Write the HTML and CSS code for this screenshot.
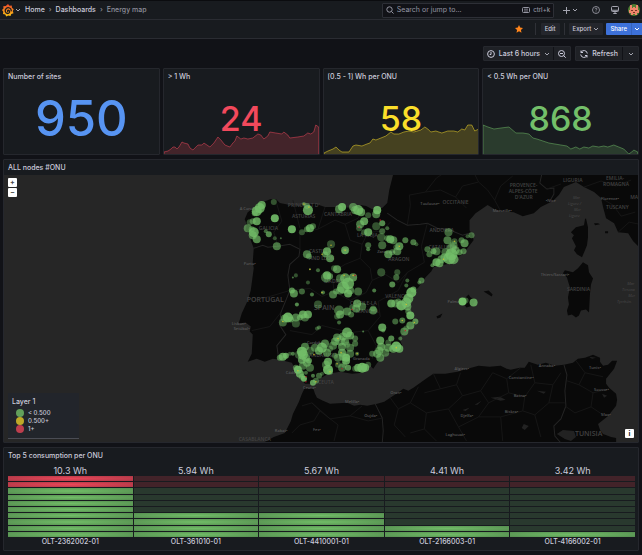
FILE: index.html
```
<!DOCTYPE html>
<html lang="en">
<head>
<meta charset="utf-8">
<title>Energy map - Dashboards</title>
<link rel="stylesheet" href="styles.css">
</head>
<body>
<svg class="defs" aria-hidden="true">
  <symbol id="chev" viewBox="0 0 6 6"><path d="M1 2l2 2 2-2" fill="none" stroke="currentColor"/></symbol>
</svg>

<header class="topbar">
  <button class="logo" aria-label="Menu">
    <svg width="12" height="13" viewBox="0 0 24 26">
      <defs><linearGradient id="flame" x1="0" y1="1" x2="0" y2="0"><stop offset="0" stop-color="#fcc811"/><stop offset="1" stop-color="#f0472c"/></linearGradient></defs>
      <path fill="url(#flame)" d="M12 0l3 3.500 4.500-.5.500 4.500 3.500 3-2 3.500 1.500 4.500-4.500 1.500-1.500 4-4.500-1L8.500 25l-2-4-4.500-1 .5-4.500L0 12l3-3-.5-4.500 5-.5z"/>
      <path fill="none" stroke="#181b1f" stroke-width="2.600" stroke-linecap="round" d="M18.500 13.500c0-5-6-8-10-4.500s-2 10 3 10c4 0 5-5 2-6.300-2-.7-3 1-2 2.300"/>
    </svg>
    <svg class="chev"><use href="#chev"/></svg>
  </button>
  <nav class="crumbs" aria-label="Breadcrumbs">
    <a href="#">Home</a><span>›</span><a href="#">Dashboards</a><span>›</span><span class="here">Energy map</span>
  </nav>
  <label class="search">
    <svg width="8" height="8" viewBox="0 0 8 8" fill="none" stroke="currentColor"><circle cx="3.500" cy="3.500" r="2.700"/><path d="M5.500 5.500l2 2"/></svg>
    <input type="text" placeholder="Search or jump to..." aria-label="Search">
    <svg width="8" height="6" viewBox="0 0 8 6" fill="none" stroke="currentColor"><rect x=".5" y=".5" width="7" height="5" rx="1"/><path d="M2 2.200h4M2 4h4" stroke-width=".8"/></svg>
    <kbd>ctrl+k</kbd>
  </label>
  <div class="tools">
    <button class="add" aria-label="New"><svg width="7" height="7" viewBox="0 0 7 7" stroke="currentColor"><path d="M3.500 0v7M0 3.500h7"/></svg><svg class="chev"><use href="#chev"/></svg></button>
    <button aria-label="Help"><svg width="8" height="8" viewBox="0 0 16 16" fill="none" stroke="currentColor" stroke-width="1.600"><circle cx="8" cy="8" r="7"/><path d="M6 6.500c0-3 4-2.500 4-.3C10 7.500 8 7.500 8 9.200M8 11v1.500"/></svg></button>
    <button aria-label="News"><svg width="8" height="8" viewBox="0 0 16 16" fill="none" stroke="currentColor" stroke-width="2"><rect x="1" y="1" width="14" height="10" rx="2"/><path d="M2 8.500h12M8 11v4M4.500 15h7"/></svg></button>
    <button aria-label="Profile"><svg width="12" height="12" viewBox="0 0 12 12"><circle cx="6" cy="6" r="6" fill="#4f7f32"/><path fill="#f0876c" d="M2 1h2v3h1V3h2v1h1V1h2v5h1v3H9v2H7v-1H5v1H3V9H1V6h1z"/><path fill="#7b3426" d="M3 6h2v1H3zM7 6h2v1H7zM5 8h2v1H5z"/></svg></button>
  </div>
</header>

<div class="actions">
  <button class="star" aria-label="Unmark as favorite"><svg width="8" height="8" viewBox="0 0 16 16"><path fill="#ff851b" d="M8 0l2.400 5.200 5.600.7-4.100 3.900 1.100 5.700L8 12.700l-5 2.800 1.100-5.700L0 5.900l5.600-.7z"/></svg></button>
  <i class="rule"></i>
  <button class="btn">Edit</button>
  <i class="rule"></i>
  <button class="btn export">Export<svg class="chev"><use href="#chev"/></svg></button>
  <div class="share"><button>Share</button><button aria-label="Share options"><svg class="chev"><use href="#chev"/></svg></button></div>
</div>

<main>
  <div class="controls">
    <div class="group">
      <button class="range"><svg width="8" height="8" viewBox="0 0 8 8" fill="none" stroke="currentColor"><circle cx="4" cy="4" r="3.400"/><path d="M4 2v2.500H2.700"/></svg>Last 6 hours<svg class="chev"><use href="#chev"/></svg></button>
      <button class="zoomout" aria-label="Zoom out"><svg width="8" height="8" viewBox="0 0 8 8" fill="none" stroke="currentColor"><circle cx="3.500" cy="3.500" r="3"/><path d="M5.500 5.500L7.700 7.700M2 3.500h3"/></svg></button>
    </div>
    <div class="group">
      <button class="refresh"><svg width="8" height="8" viewBox="0 0 8 8" fill="none" stroke="currentColor"><path d="M1 .5v2h2M1 2.500A3.300 3.300 0 0 1 7.300 3.500M7 7.500v-2H5M7 5.500A3.300 3.300 0 0 1 .7 4.500"/></svg>Refresh</button>
      <button class="every" aria-label="Refresh interval"><svg class="chev"><use href="#chev"/></svg></button>
    </div>
  </div>

  <div class="stats">
    <section class="panel stat blue"><h2>Number of sites</h2><p class="big">950</p></section>
    <section class="panel stat red"><h2>&gt; 1 Wh</h2><p>24</p>
      <svg class="spark" viewBox="0 0 155 32" preserveAspectRatio="none"><path d="M0 30L4 29 7 27 9 25 11 25 13 27 15 25 18 20 20 21 24 22 26 26 29 28 31 26 34 23 38 23 40 21 43 23 46 25 50 21 54 15 57 18 61 23 66 25 69 21 71 19 73 14 77 17 80 16 84 17 89 16 94 12 97 13 100 17 104 14 106 10 112 11 118 12 120 10 124 13 126 16 134 15 140 14 144 11 147 12 150 10 152 3 155 5V33H0z"/></svg></section>
    <section class="panel stat yellow"><h2>[0.5 - 1] Wh per ONU</h2><p>58</p>
      <svg class="spark" viewBox="0 0 155 32" preserveAspectRatio="none"><path d="M0 31L4 29 9 27 12 25 15 28 18 30 25 30 29 24 32 23 38 24 43 22 46 21 49 17 52 18 57 16 62 14 67 10 70 12 75 12 80 10 85 9 90 10 97 8 101 5 104 7 107 10 112 9 118 11 124 9 130 9 134 10 138 7 141 8 144 3 148 3 151 9 155 7V33H0z"/></svg></section>
    <section class="panel stat green"><h2>&lt; 0.5 Wh per ONU</h2><p>868</p>
      <svg class="spark" viewBox="0 0 155 32" preserveAspectRatio="none"><path d="M0 3L5 5 11 7 18 6 26 5 33 11 40 11 46 12 50 16 54 17 60 19 66 21 72 22 78 23 84 24 88 27 93 25 97 27 101 25 106 26 110 24 116 25 121 24 125 25 131 23 136 25 141 27 144 30 146 32 149 30 151 28 155 30V33H0z"/></svg></section>
  </div>

  <section class="panel map">
    <h2>ALL nodes #ONU</h2>
    <div class="canvas">
      <svg class="world" viewBox="4 175 634 266" preserveAspectRatio="xMidYMid slice" role="img" aria-label="Nodes in Spain">
        <g class="land">
          <path d="M393 174L391 182 389 190 387 203 382 208 377 208 372 209 366 206 360 205 354 208 340 207 325 207 316 204 310 204 300 206 290 205 280 203 276 199 271 199 266 201 258 203 254 208 248 212 245 219 247 224 246 230 251 235 251 240 254 248 253 262 254 268 251 290 248 300 242 313 239 323 246 322 251 326 250 331 253 334 252 353 248 361 257 358 265 361 273 358 280 359 292 362 295 368 300 377 305 383 315 383 320 378 328 373 340 371 352 373 362 372 367 368 370 365 373 368 377 362 382 358 385 353 400 350 402 345 399 338 402 333 408 328 417 322 411 317 406 308 409 299 413 292 418 287 425 277 431 271 433 267 450 263 463 253 473 240 472 235 469 230 469 220 475 213 487 205 494 209 500 211 513 212 522 216 533 213 540 207 552 201 558 195 563 187 575 182 583 187 593 192 600 198 602 207 605 218 613 223 617 232 627 233 632 241 639 248V174z"/>
          <path d="M585 218L587 227 587 237 586 245 584 250 581 257 576 254 573 250 575 246 571 238 573 235 570 232 575 227 583 225 584 219z"/>
          <path d="M582 262L587 265 588 272 592 278 590 284 589 293 588 312 585 309 580 310 578 315 575 317 571 314 567 315 566 310 568 304 567 297 569 287 566 277 562 273 564 270 572 272 577 268z"/>
          <path d="M461 301L468 294 470 297 475 299 472 305 466 307zM483 291L488 290 492 294 491 296zM436 316L442 313 440 317 437 318zM593 223h4l2 1-5 1zM604 231h3v2h-3z"/>
          <path d="M263 442L274 436 285 432 291 420 293 413 299 401 302 393 305 387 309 388 313 387 315 393 317 397 323 400 330 403 347 402 354 405 360 404 367 405 377 403 384 401 390 397 396 393 403 388 408 390 413 387 420 382 427 377 433 373 445 373 457 371 467 368 478 365 489 366 500 365 506 368 510 369 519 367 524 367 528 361 537 364 545 362 554 365 563 364 572 362 577 358 584 357 592 354 599 357 599 361 602 365 607 364 611 360 616 360 613 368 605 378 605 383 608 387 615 393 616 399 615 405 607 415 597 423 599 429 602 433 610 436 615 437V442z"/>
        </g>
        <g class="water"><path d="M556 433L562 429 573 430 575 436 570 440 564 438zM523 423l5 2-4 4-3-2zM490 397l9-1 6 3-5 1zM462 409l7-2-4 3zM474 404l7-4-4 4zM536 390l9 1-2 2zM601 393l5 2-3 2zM588 356l7 1-4 1z"/></g>
        <g class="border">
          <path d="M254 248L263 245 268 247 278 246 290 244 300 249 299 256 290 264 288 275 290 290 281 312 280 325 286 334 277 345 279 359M387 213L397 220 407 225 420 224 427 223 437 228 450 230 462 235 472 232M541 174L539 183 546 189 553 188 553 194 549 201M375 403L382 417 383 430 382 442M563 364L566 374 564 390 565 405 560 418 553 425 554 435 560 442"/>
        </g>
        <g class="region">
          <path d="M278 246L274 232 282 221 277 204M300 249L300 232 318 229 325 207M318 229L335 220 345 224 358 218 363 207M345 224L350 240 362 244 368 232 382 231 390 222M290 290L310 288 322 296 334 291 350 300 366 292 372 280 385 274 398 282 407 272 424 262 421 246 427 223M362 244L360 258 370 268 372 280M290 330L312 334 322 325 350 332 368 330 380 316 378 301 398 290 407 272M368 330L376 345 372 358M334 291L332 272 345 264 360 258M293 200L300 228M254 300L270 296 290 290M252 330L270 326 281 312M407 225L410 205 409 195 425 192 436 178 442 174M425 192L440 190 455 197 466 208M455 197L462 186 478 182 487 190 494 200 500 211M478 182L474 174M494 200L500 186 512 176M546 189L560 184M583 187L600 181 615 186 630 180M600 198L612 205 620 216 634 212M617 232L628 222 638 224"/>
          <path d="M302 405L312 402 320 410 314 420 300 424 292 432M312 402L330 418 350 415 362 405M320 410L338 424 334 440M350 415L368 420 383 417M390 397L398 408 410 402 418 386M398 408L394 424 405 436M410 402L426 412 424 428 410 432M433 373L440 388 424 392M440 388L456 384 460 372M456 384L462 395 448 408 426 412M462 395L480 390 492 372M480 390L488 402 478 416 458 426 448 408M492 372L506 378 520 367M506 378L508 392 488 402M508 392L524 396 534 382 530 364M524 396L522 410 500 416 502 440M534 382L552 384 560 372M552 384L548 402 534 414 522 410M548 402L564 402M534 414L540 436M575 360L584 372 578 384 566 380M584 372L602 376M578 384L592 392 608 388M592 392L590 406 574 412 564 405M590 406L602 414M458 426L466 440M478 416L500 416M424 428L436 440"/>
        </g>
        <g class="names">
          <text x="247" y="302" class="lg">PORTUGAL</text><text x="314" y="310" class="lg">SPAIN</text><text x="574" y="435" class="lg">TUNISIA</text>
          <text x="259" y="230">GALICIA</text><text x="288" y="207">PRINCIPAT D'</text><text x="292" y="218">ASTURIAS</text><text x="324" y="216">CANTABRIA</text><text x="357" y="237">LA RIOJA</text><text x="309" y="253">CASTILLA</text><text x="309" y="260">AND LEÓN</text><text x="324" y="283">MADRID</text><text x="388" y="261">ARAGON</text><text x="429" y="232">ANDORRA</text><text x="428" y="249">CATALUNYA</text><text x="385" y="298">VALENCIAN</text><text x="350" y="305">CASTILE-LA</text><text x="356" y="312">MANCHA</text><text x="442" y="204">OCCITANIE</text>
          <text x="509" y="187">PROVENCE-</text><text x="508" y="193">ALPES-CÔTE</text><text x="514" y="199">D'AZUR</text><text x="562" y="182">LIGURIA</text><text x="605" y="180">EMILIA-</text><text x="602" y="186">ROMAGNA</text><text x="605" y="209">TUSCANY</text><text x="629" y="199">MA</text><text x="566" y="291">SARDINIA</text><text x="309" y="356">ANDALUSIA</text><text x="318" y="383">CEUTA</text><text x="239" y="440">CASABLANCA</text>
          <g class="city"><text x="420" y="205">Toulouse•</text><text x="492" y="212">Marseille•</text><text x="545" y="202">•Nice</text><text x="600" y="200">Florence•</text><text x="540" y="276">Thiers/Sassari•</text><text x="240" y="210">A Coruña</text><text x="244" y="265">Porto•</text><text x="232" y="324">Lisbon•</text><text x="234" y="329">Setúbal•</text><text x="377" y="253">Zaragoza</text><text x="307" y="343">Cordoba</text><text x="353" y="359">Granada</text><text x="286" y="373">Cádiz</text><text x="303" y="388">Ceuta•</text><text x="447" y="303">Palma•</text><text x="345" y="402">Melilla•</text><text x="390" y="393">Oran•</text><text x="454" y="369">Algiers•</text><text x="364" y="416">Oujda•</text><text x="313" y="430">Fes•</text><text x="275" y="431">Rabat•</text><text x="508" y="378">Constantine•</text><text x="538" y="366">Annaba•</text><text x="513" y="396">Batna•</text><text x="504" y="412">Biskra•</text><text x="460" y="416">Djelfa•</text><text x="445" y="435">Laghouat•</text><text x="588" y="368">Tunis•</text><text x="593" y="390">Sousse•</text><text x="600" y="415">Sfax•</text></g>
          <g class="sea"><text x="572" y="199">Mar</text><text x="567" y="205">Ligure /</text><text x="573" y="211">Mer</text><text x="568" y="217">Ligure</text><text x="626" y="285">Mar</text><text x="621" y="291">Tirreno</text><text x="627" y="297">Mer</text><text x="616" y="303">Tyrrhén.</text></g>
        </g>
        <g id="nodes"></g>
      </svg>
      <div class="zoom"><button aria-label="Zoom in">+</button><button aria-label="Zoom out">–</button></div>
      <div class="legend">
        <h3>Layer 1</h3>
        <ul><li class="ok">&lt; 0.500</li><li class="warn">0.500+</li><li class="bad">1+</li></ul>
      </div>
      <button class="info" aria-label="Attributions">i</button>
    </div>
  </section>

  <section class="panel top">
    <h2>Top 5 consumption per ONU</h2>
    <div class="bars" id="bars"></div>
  </section>
</main>
<script src="script.js"></script>
</body>
</html>
```
FILE: styles.css
```
* { box-sizing: border-box; }
body { margin: 0; background: #111217; color: #ccccdc; font: 500 7px/10px Inter, "Liberation Sans", sans-serif; border-top: 1px solid #0b0c0f; }
h2, h3, p, ul { margin: 0; padding: 0; font-size: inherit; font-weight: 500; }
button { font: inherit; color: inherit; background: none; border: 0; padding: 0; display: flex; align-items: center; justify-content: center; }
a { color: inherit; text-decoration: none; }
svg { flex: none; display: block; }
.defs { position: absolute; width: 0; height: 0; }
.chev { width: 6px; height: 6px; color: #a4a5b0; }

.topbar { display: flex; align-items: center; height: 19px; background: #181b1f; border-bottom: 1px solid #2a2c32; padding: 0 2px; }
.logo { gap: 1px; }
.crumbs { display: flex; gap: 4px; margin-left: 4px; flex: 1; }
.crumbs span { color: #8e8f9b; }
.search { display: flex; align-items: center; gap: 3px; width: 27%; height: 15px; padding: 0 3px; border: 1px solid #2d2f36; border-radius: 1px; background: #111217; color: #9596a2; }
.search input { flex: 1; min-width: 0; padding: 0; border: 0; outline: 0; background: none; color: inherit; font: 400 7px/10px Inter, sans-serif; }
.search input::placeholder { color: #9596a2; opacity: 1; }
.search kbd { font: 500 6px/10px Inter, sans-serif; }
.tools { display: flex; align-items: center; gap: 11px; margin-left: 9px; color: #a4a5b0; }
.tools button:last-child { margin-left: -2px; }
.add { gap: 2px; margin-right: 3px; }

.actions { display: flex; align-items: center; justify-content: flex-end; height: 19px; background: #181b1f; border-bottom: 1px solid #2a2c32; }
.star { margin-right: 12px; }
.rule { width: 1px; height: 12px; background: #2f3137; }
.btn { height: 12px; padding: 0 4px; margin: 0 4px 0 5px; background: #24262c; border-radius: 1px; font-size: 6px; }
.export { gap: 2px; margin: 0 3px 0 4px; }
.share { display: flex; height: 12px; background: #3d71d9; color: #fff; border-radius: 1px 0 0 1px; font-size: 6px; }
.share button { padding: 0 4px; }
.share button + button { padding: 0 2px; border-left: 1px solid #3563bd; }
.share .chev { color: #fff; }

main { display: flex; flex-direction: column; gap: 4px; padding: 7px 3px 4px; }
.controls { display: flex; justify-content: flex-end; gap: 4px; margin-bottom: 3px; }
.group { display: flex; height: 15px; background: #1f2126; border: 1px solid #26282e; border-radius: 1px; }
.group button + button { border-left: 1px solid #111217; }
.range { gap: 4px; padding: 0 3px; }
.zoomout { width: 17px; }
.refresh { gap: 4px; padding: 0 4px; }
.every { width: 16px; }

.panel { background: #181b1f; border: 1px solid #25272d; border-radius: 1px; overflow: hidden; }
.panel h2 { padding: 3px 4px 2px; }
.stats { display: grid; grid-template-columns: repeat(4, 1fr); gap: 3px; }
.stat { position: relative; height: 87px; display: flex; flex-direction: column; }
.stat p { position: relative; z-index: 1; flex: 1; display: flex; align-items: center; justify-content: center; font-size: 34px; line-height: 40px; }
.stat p.big { font-size: 49px; }
.spark { position: absolute; left: 0; bottom: 0; width: 100%; height: 32px; }
.spark path { stroke-width: 1; fill-opacity: .2; stroke-opacity: .5; fill: currentColor; stroke: currentColor; }
.blue p { color: #5794f2; }
.red p, .red .spark { color: #f2495c; }
.yellow p, .yellow .spark { color: #fade2a; }
.green p, .green .spark { color: #73bf69; }
.stat .spark { z-index: 0; }

.canvas { position: relative; background: #262626; }
.world { width: 100%; height: 267px; }
.land { fill: #090909; }
.water { fill: #222; }
.border, .region { fill: none; stroke: #242424; stroke-width: 1; }
.region { stroke: #191919; stroke-width: .8; }
.names { font: 600 5px "Open Sans", Lato, sans-serif; fill: #424242; }
.names .lg { font-size: 7px; }
.names .city { font-size: 4px; fill: #585858; }
.names .sea { font-size: 4px; font-style: italic; font-weight: 400; fill: #4a4a4a; }
#nodes { fill: #73bf69; }
#nodes .warn { fill: #d8c42a; }
#nodes .bad { fill: #c4162a; }
.zoom { position: absolute; left: 4px; top: 3px; display: grid; gap: 1px; }
.zoom button, .info { width: 9px; height: 9px; background: #fff; color: #444; border-radius: 1px; font-weight: 700; line-height: 9px; }
.info { position: absolute; right: 4px; bottom: 4px; color: #222; }
.legend { position: absolute; left: 4px; bottom: 3px; width: 71px; padding: 4px 4px 5px; background: #22252b; border-bottom: 1px solid #4a4c54; }
.legend h3 { font-weight: 500; line-height: 9px; margin-bottom: 3px; }
.legend ul { list-style: none; padding-left: 4px; font-size: 6px; }
.legend li { display: flex; align-items: center; gap: 4px; line-height: 8px; }
.legend li::before { content: ""; width: 8px; height: 8px; border-radius: 50%; background: #629f5b; }
.legend .warn::before { background: #bea928; }
.legend .bad::before { background: #bd3e4d; }

.top h2 { padding-bottom: 5px; }
.bars { display: grid; grid-template-columns: repeat(5, 1fr); gap: 1px; padding: 0 3px 3px 4px; }
.bar { text-align: center; }
.bar .value { font-size: 9px; line-height: 10px; font-weight: 400; }
.cells { display: grid; grid-template-rows: repeat(10, 1fr); gap: 1px; height: 61px; }
.cells i { background: #29392e; }
.cells .high { background: #422329; }
.cells .on { background: radial-gradient(ellipse at center, #71bd67, #558d50); }
.cells .high.on { background: radial-gradient(ellipse at center, #ea4759, #ad3846); }
```
FILE: script.js
```
// Node clusters: x, y, radius, opacity (tenths)
const nodes = `262,205,4,8 260,208,5,8 257,211,5,8 255,213,3,6 274,202,3,4 257,221,4,8 253,221,3,5 250,222,3,4 275,218,4,9 248,228,4,6 252,229,3,5 254,232,5,8 253,235,4,6 257,239,4,7 269,234,3,7 266,231,2,5 275,238,2,4 281,238,1,5 277,246,4,6 292,229,4,9 302,232,3,4 310,228,4,8 313,226,3,5 307,229,3,5 308,210,5,8 304,204,2,5 307,206,3,5 342,207,4,9 339,209,4,6 353,207,4,6 358,210,5,8 361,212,4,7 355,210,4,6
377,210,4,9 376,214,4,6 368,215,3,4 364,221,4,8 360,224,4,6 359,228,3,4 368,232,4,8 364,232,3,4 376,226,4,4 382,223,3,7 382,231,3,5 387,228,2,5 381,237,4,4 390,239,4,8 393,240,4,6 387,238,3,5 405,240,3,6 413,242,3,6 416,244,2,4 399,246,4,7 382,245,4,5 368,245,3,5 368,249,2,6 388,254,4,7 397,251,4,6 392,252,3,5 396,247,3,4 331,244,4,4 345,250,4,7 345,251,3,5 327,251,4,8 330,258,4,7 325,254,3,6 307,254,4,6 309,256,3,5 337,269,4,7 334,268,3,4 327,275,4,8 326,277,5,5 330,276,3,6 318,270,2,5 310,269,1,5 296,275,2,4 293,277,1,6 308,282,2,4 302,291,3,5 292,290,3,7 294,293,4,7 312,294,2,6 323,292,2,6 333,294,4,6 336,291,3,5 345,278,5,7 340,278,4,5 353,277,4,7 348,283,6,8 343,287,6,8 340,290,4,5 350,290,4,6 348,293,4,8 358,291,4,5 297,304,2,7 318,304,4,4
381,272,4,4 397,272,3,4 396,277,3,5 392,284,3,7 407,280,2,5 406,285,2,5 421,280,3,6 419,282,2,5 374,290,2,6 411,292,5,9 413,289,3,7 408,298,5,8 406,302,5,7 401,305,5,9 395,303,4,5 391,303,4,8 407,306,4,7 398,301,3,5 410,315,4,9 408,311,3,5 415,321,3,7 410,325,4,7 402,320,3,6 395,321,3,5 404,331,4,6 406,328,3,4 400,338,2,5 391,338,3,7 396,346,5,9 393,348,4,7 399,348,4,8 388,347,4,6 380,340,4,8 381,346,4,7 377,353,4,6 380,357,4,6 385,352,4,5 379,350,4,6 372,353,3,5 388,342,3,4
448,232,4,5 447,240,4,6 454,241,3,4 464,243,4,7 461,240,3,5 471,235,3,5 467,236,2,4 427,249,3,5 429,254,3,5 436,251,4,5 433,251,3,7 463,251,3,6 459,252,3,6 451,248,5,5 453,245,4,5 445,252,4,5 451,254,6,8 449,258,6,8 453,259,5,7 444,257,4,6 439,263,4,7 436,262,4,8 432,265,2,6 441,259,4,6 455,250,4,6 462,301,4,10 465,300,3,4 473,302,4,8
288,317,5,9 285,318,4,6 283,322,4,5 291,319,3,6 296,317,4,6 300,317,3,6 303,314,4,8 308,314,4,8 305,317,4,5 296,323,4,4 319,327,2,5 317,328,2,4 339,310,5,5 340,314,4,7 337,316,3,4 339,322,2,5 347,311,4,6 351,314,3,5 357,303,4,7 356,308,4,6 362,306,4,5 352,307,3,4 373,310,4,6 373,308,3,4 382,327,4,8 383,330,2,5 363,331,1,6
347,332,5,8 350,335,4,7 343,336,4,6 355,338,3,5 337,337,4,6 340,340,5,5 335,341,4,6 345,341,4,6 355,343,3,5 333,345,4,5 342,346,4,6 350,347,4,5 347,344,3,4 322,347,5,8 319,350,4,7 325,343,4,6 327,352,4,6 315,347,4,5 310,350,4,4 330,348,3,4 302,351,5,9 303,354,5,8 305,346,4,6 302,359,4,7 307,362,4,6 310,367,4,5 303,365,4,5 309,360,3,7 306,357,4,6 299,354,4,4 342,352,4,7 346,357,4,9 346,360,4,8 343,356,4,6 338,357,4,5 350,353,4,5 335,355,3,4 328,361,4,8 326,364,4,5 328,369,5,9 330,371,3,6 342,367,4,5 348,367,3,7 344,364,3,4 338,364,3,4 358,367,4,8 362,367,5,9 365,367,4,8 368,364,3,4 355,368,3,4 357,353,2,5 283,356,4,8 280,357,3,6 286,355,3,8 293,353,2,6 290,353,2,4 298,369,4,9 300,373,4,8 296,367,3,5 304,378,3,9 302,376,3,6 313,382,3,8 316,380,3,5 319,375,3,5 306,372,2,5 313,375,2,6 322,373,2,4`;
const alerts = {
  warn: [[309, 207], [304, 204], [345, 250], [322, 254], [331, 245], [399, 246], [454, 241], [443, 259], [353, 275], [344, 275], [310, 269], [322, 292], [406, 304], [402, 320], [414, 322], [283, 321], [338, 338], [357, 353], [314, 354], [341, 352], [337, 363], [298, 370], [316, 381], [330, 371], [396, 347]],
  bad: [[359, 227], [380, 220], [355, 275], [352, 309], [306, 376], [306, 381], [342, 368], [405, 330]]
};
const layer = document.getElementById("nodes");
function dot(x, y, r, opacity, cls) {
  const c = document.createElementNS("http://www.w3.org/2000/svg", "circle");
  c.setAttribute("cx", x);
  c.setAttribute("cy", y);
  c.setAttribute("r", r);
  c.setAttribute("opacity", opacity);
  if (cls) c.setAttribute("class", cls);
  layer.append(c);
}
nodes.split(/\s+/).forEach(n => {
  const [x, y, r, o] = n.split(",").map(Number);
  dot(x, y, r, o / 10);
});
for (const cls in alerts) alerts[cls].forEach(([x, y]) => dot(x, y, 0.8, 0.8, cls));

// Top consumers: name, Wh, lit cells out of ten
const top5 = [["OLT-2362002-01", "10.3", 10], ["OLT-361010-01", "5.94", 4], ["OLT-4410001-01", "5.67", 4], ["OLT-2166003-01", "4.41", 2], ["OLT-4166002-01", "3.42", 1]];
document.getElementById("bars").innerHTML = top5.map(([name, wh, lit]) => {
  let cells = "";
  for (let i = 10; i > 0; i--) cells += `<i class="${i > 8 ? "high" : "low"}${i <= lit ? " on" : ""}"></i>`;
  return `<div class="bar"><div class="value">${wh} Wh</div><div class="cells">${cells}</div><div>${name}</div></div>`;
}).join("");
```
